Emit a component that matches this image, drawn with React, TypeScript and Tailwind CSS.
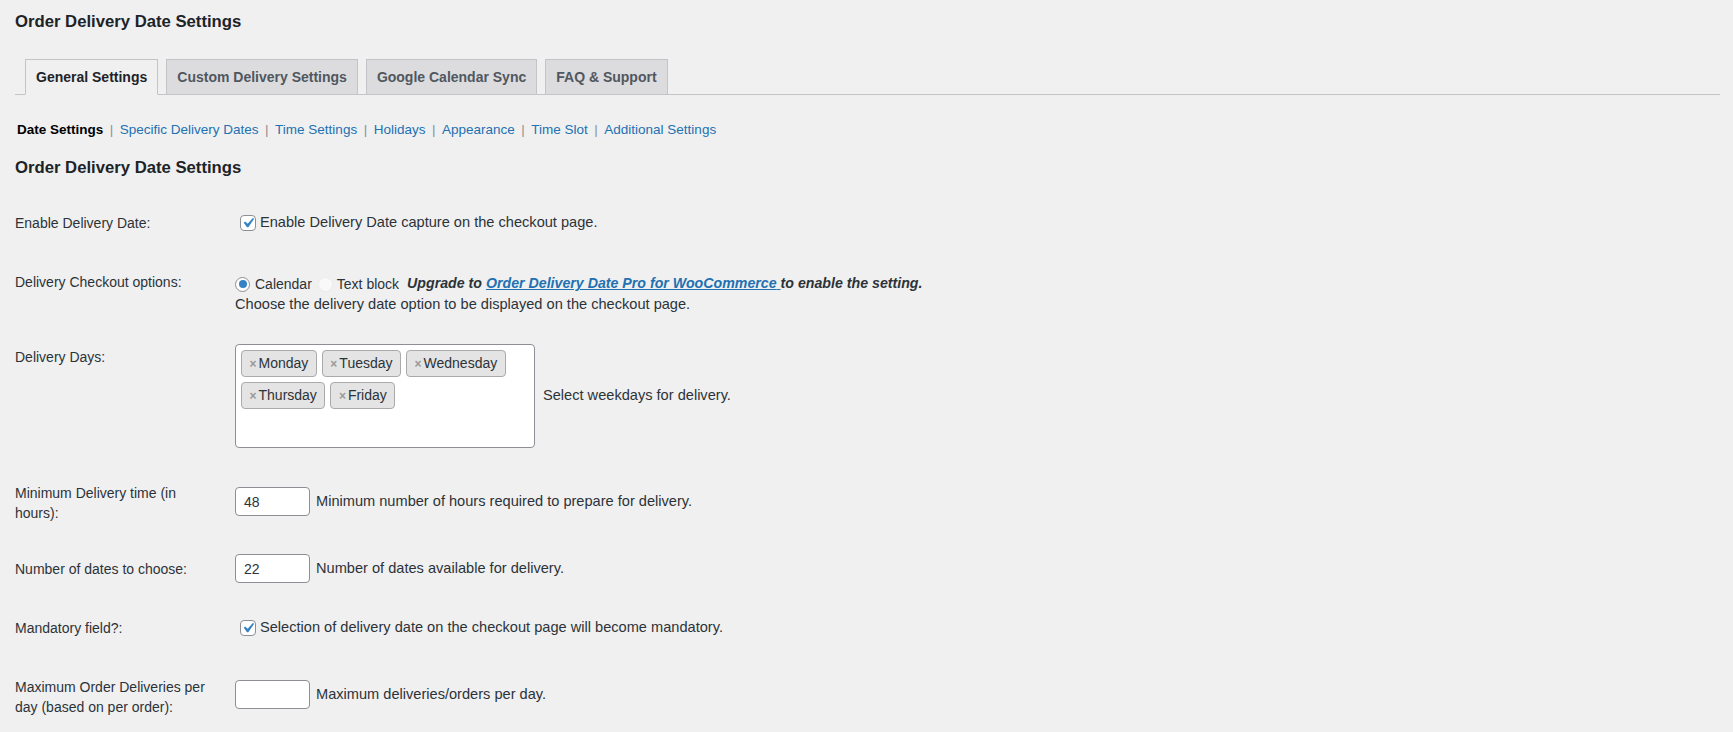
import React from "react";

const tabs = [
  { label: "General Settings", active: true },
  { label: "Custom Delivery Settings", active: false },
  { label: "Google Calendar Sync", active: false },
  { label: "FAQ & Support", active: false },
];

const sections = [
  "Date Settings",
  "Specific Delivery Dates",
  "Time Settings",
  "Holidays",
  "Appearance",
  "Time Slot",
  "Additional Settings",
];

const days = ["Monday", "Tuesday", "Wednesday", "Thursday", "Friday"];

function Checkbox() {
  return (
    <span className="ml-[5px] mr-[4px] flex h-4 w-4 shrink-0 items-center justify-center rounded-[4px] border border-[#8c8f94] bg-white">
      <svg viewBox="0 0 20 20" className="h-5 w-5 shrink-0" fill="#3582c4">
        <path d="M14.83 4.89l1.34.94-5.81 8.38H9.02L5.78 9.67l1.34-1.25 2.57 2.4z" />
      </svg>
    </span>
  );
}

function Row({
  label,
  labelPad,
  valuePad,
  height,
  children,
}: {
  label: string;
  labelPad: string;
  valuePad: string;
  height: string;
  children: React.ReactNode;
}) {
  return (
    <div className={`flex ${height}`}>
      <div className={`w-[220px] shrink-0 pr-[20px] leading-5 ${labelPad}`}>
        {label}
      </div>
      <div className={`flex-1 ${valuePad}`}>{children}</div>
    </div>
  );
}

function NumberInput({ value }: { value: string }) {
  return (
    <input
      defaultValue={value}
      className="h-[29px] w-[75px] shrink-0 rounded-[4px] border border-[#8c8f94] bg-white px-[8px] text-[14px] text-[#2c3338] outline-none"
    />
  );
}

export default function App() {
  return (
    <div className="min-h-screen bg-[#f0f0f1] px-[15px] pt-[11px] font-['Liberation_Sans',Arial,sans-serif] text-[14px] text-[#2c3338]">
      <h1 className="text-[16.7px] font-bold leading-[22px] text-[#1d2327]">
        Order Delivery Date Settings
      </h1>

      {/* Tabs */}
      <div className="mt-[26px] mr-[-2px] flex items-end gap-[8px] border-b border-[#c3c4c7] pl-[10px]">
        {tabs.map((t) => (
          <div
            key={t.label}
            className={
              t.active
                ? "-mb-px flex h-[36px] items-center border border-[#c3c4c7] border-b-[#f0f0f1] bg-[#f0f0f1] px-[10px] text-[14px] font-bold text-[#1d2327]"
                : "-mb-px flex h-[36px] items-center border border-[#c3c4c7] bg-[#dcdcde] px-[10px] text-[14px] font-bold text-[#50575e]"
            }
          >
            {t.label}
          </div>
        ))}
      </div>

      {/* Sub navigation */}
      <div className="mt-[26px] ml-[2px] flex items-center text-[13.5px] leading-[18px]">
        {sections.map((s, i) => (
          <span key={s} className="flex items-center">
            {i > 0 && <span className="px-[6.5px] text-[#8c8f94]">|</span>}
            {i === 0 ? (
              <span className="font-bold text-[#000]">{s}</span>
            ) : (
              <a className="text-[#2271b1]">{s}</a>
            )}
          </span>
        ))}
      </div>

      <h2 className="mt-[18px] text-[16.7px] font-bold leading-[22px] text-[#1d2327]">
        Order Delivery Date Settings
      </h2>

      {/* Form table */}
      <div className="mt-[14px]">
        <Row label="Enable Delivery Date:" labelPad="pt-[20px]" valuePad="pt-[20px]" height="h-[60px]">
          <div className="flex h-5 items-center">
            <Checkbox />
            <span className="text-[14.6px]">Enable Delivery Date capture on the checkout page.</span>
          </div>
        </Row>

        <Row label="Delivery Checkout options:" labelPad="pt-[19px]" valuePad="pt-[21px]" height="h-[74px]">
          <div className="flex h-5 items-center whitespace-nowrap">
            <span className="mr-[5px] flex h-[15px] w-[15px] shrink-0 items-center justify-center rounded-full border border-[#8c8f94] bg-white">
              <span className="h-[8px] w-[8px] rounded-full bg-[#3582c4]" />
            </span>
            <span>Calendar</span>
            <span className="ml-[6px] mr-[4px] h-[15px] w-[15px] shrink-0 rounded-full border border-[#ececec] bg-[#f9f9f9]" />
            <span>Text block</span>
            <span className="ml-[8px] text-[14.2px] font-bold italic">
              Upgrade to{" "}
              <a className="text-[#2271b1] underline">
                Order Delivery Date Pro for WooCommerce{" "}
              </a>
              to enable the setting.
            </span>
          </div>
          <p className="text-[14.6px] leading-5">
            Choose the delivery date option to be displayed on the checkout page.
          </p>
        </Row>

        <Row label="Delivery Days:" labelPad="pt-[20px]" valuePad="pt-[17px]" height="h-[134px]">
          <div className="flex items-center">
            <div className="h-[104px] w-[300px] shrink-0 rounded-[4px] border border-[#8c8f94] bg-white p-[5px]">
              <div className="flex flex-wrap content-start gap-[5px]">
                {days.map((d) => (
                  <span
                    key={d}
                    className="flex h-[27px] items-center rounded-[4px] border border-[#aaa] bg-[#e4e4e4] px-[7.5px] text-[#2c3338]"
                  >
                    <span className="mr-[2px] text-[12px] font-bold text-[#999]">×</span>
                    {d}
                  </span>
                ))}
              </div>
            </div>
            <span className="ml-[8px] text-[14.6px]">Select weekdays for delivery.</span>
          </div>
        </Row>

        <Row label="Minimum Delivery time (in hours):" labelPad="pt-[22px]" valuePad="pt-[26px]" height="h-[80px]">
          <div className="flex items-center">
            <NumberInput value="48" />
            <span className="ml-[6px] text-[14.6px]">
              Minimum number of hours required to prepare for delivery.
            </span>
          </div>
        </Row>

        <Row label="Number of dates to choose:" labelPad="pt-[18px]" valuePad="pt-[13px]" height="h-[60px]">
          <div className="flex items-center">
            <NumberInput value="22" />
            <span className="ml-[6px] text-[14.6px]">Number of dates available for delivery.</span>
          </div>
        </Row>

        <Row label="Mandatory field?:" labelPad="pt-[17px]" valuePad="pt-[17px]" height="h-[60px]">
          <div className="flex h-5 items-center">
            <Checkbox />
            <span className="text-[14.6px]">
              Selection of delivery date on the checkout page will become mandatory.
            </span>
          </div>
        </Row>

        <Row label="Maximum Order Deliveries per day (based on per order):" labelPad="pt-[16px]" valuePad="pt-[19px]" height="h-[71px]">
          <div className="flex items-center">
            <NumberInput value="" />
            <span className="ml-[6px] text-[14.6px]">Maximum deliveries/orders per day.</span>
          </div>
        </Row>
      </div>
    </div>
  );
}
